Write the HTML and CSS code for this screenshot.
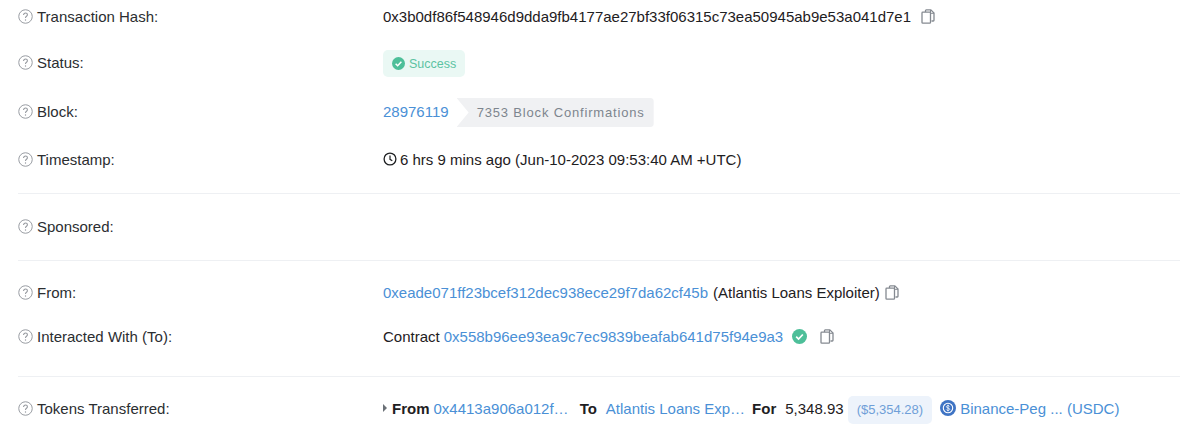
FILE: index.html
```html
<!DOCTYPE html>
<html lang="en">
<head>
  <meta charset="UTF-8">
  <title>Transaction Details</title>
  <link rel="stylesheet" href="styles.css">
</head>
<body>
  <svg class="defs" width="0" height="0">
    <symbol id="i-help" viewBox="0 0 14 14">
      <circle cx="7" cy="7" r="6.3" fill="none" stroke="currentColor" stroke-width="0.9"/>
      <path d="M5.2 5.5c0-1 .8-1.7 1.8-1.7s1.8.7 1.8 1.6c0 1.4-1.8 1.4-1.8 2.9" fill="none" stroke="currentColor" stroke-width="1"/>
      <circle cx="7" cy="10.2" r=".65" fill="currentColor"/>
    </symbol>
    <symbol id="i-copy" viewBox="0 0 14 15">
      <path d="M4.5 3V1.6c0-.4.3-.7.7-.7h4.6L13 4v7.3c0 .4-.3.7-.7.7H10.500" fill="none" stroke="currentColor" stroke-width="1.300"/>
      <path d="M9.500 1v3.300H13" fill="none" stroke="currentColor" stroke-width="1"/>
      <rect x="1" y="3.200" width="8.500" height="11" rx=".8" fill="#fff" stroke="currentColor" stroke-width="1.300"/>
    </symbol>
    <symbol id="i-check" viewBox="0 0 14 14">
      <circle cx="7" cy="7" r="7" fill="currentColor"/>
      <path d="M3.900 7.200l2.200 2.200 4-4.300" fill="none" stroke="#fff" stroke-width="1.600"/>
    </symbol>
  </svg>

  <section class="group group-first">
    <div class="row">
      <div class="label"><svg class="help"><use href="#i-help"/></svg>Transaction Hash:</div>
      <div class="value">
        <span>0x3b0df86f548946d9dda9fb4177ae27bf33f06315c73ea50945ab9e53a041d7e1</span>
        <svg class="copy copy-hash"><use href="#i-copy"/></svg>
      </div>
    </div>
    <div class="row row-status">
      <div class="label"><svg class="help"><use href="#i-help"/></svg>Status:</div>
      <div class="value">
        <span class="badge"><svg class="check"><use href="#i-check"/></svg>Success</span>
      </div>
    </div>
    <div class="row row-block">
      <div class="label"><svg class="help"><use href="#i-help"/></svg>Block:</div>
      <div class="value">
        <a class="link">28976119</a>
        <span class="confirm">7353 Block Confirmations</span>
      </div>
    </div>
    <div class="row row-time">
      <div class="label"><svg class="help"><use href="#i-help"/></svg>Timestamp:</div>
      <div class="value">
        <svg class="clock" viewBox="0 0 14 14">
          <circle cx="7" cy="7" r="5.900" fill="none" stroke="currentColor" stroke-width="1.300"/>
          <path d="M7 3.500V7.300l2.300 1.500" fill="none" stroke="currentColor" stroke-width="1.200"/>
        </svg>
        <span>6 hrs 9 mins ago (Jun-10-2023 09:53:40 AM +UTC)</span>
      </div>
    </div>
  </section>

  <section class="group">
    <div class="row">
      <div class="label"><svg class="help"><use href="#i-help"/></svg>Sponsored:</div>
      <div class="value"></div>
    </div>
  </section>

  <section class="group group-addr">
    <div class="row">
      <div class="label"><svg class="help"><use href="#i-help"/></svg>From:</div>
      <div class="value">
        <a class="link">0xeade071ff23bcef312dec938ece29f7da62cf45b</a>
        <span class="owner">(Atlantis Loans Exploiter)</span>
        <svg class="copy copy-from"><use href="#i-copy"/></svg>
      </div>
    </div>
    <div class="row row-to">
      <div class="label"><svg class="help"><use href="#i-help"/></svg>Interacted With (To):</div>
      <div class="value">
        <span>Contract</span>
        <a class="link contract">0x558b96ee93ea9c7ec9839beafab641d75f94e9a3</a>
        <svg class="check check-green"><use href="#i-check"/></svg>
        <svg class="copy copy-to"><use href="#i-copy"/></svg>
      </div>
    </div>
  </section>

  <section class="group group-last">
    <div class="row">
      <div class="label"><svg class="help"><use href="#i-help"/></svg>Tokens Transferred:</div>
      <div class="value">
        <span class="caret"></span>
        <b class="word">From</b>
        <a class="link from-addr">0x4413a906a012f…</a>
        <b class="word word-to">To</b>
        <a class="link to-addr">Atlantis Loans Exp…</a>
        <b class="word word-for">For</b>
        <span class="amount">5,348.93</span>
        <span class="price">($5,354.28)</span>
        <svg class="coin" viewBox="0 0 16 16">
          <circle cx="8" cy="8" r="8" fill="#3f74c4"/>
          <circle cx="8" cy="8" r="4.700" fill="none" stroke="#fff" stroke-width="1.100"/>
          <path d="M9.600 6.500C9.300 5.900 8.700 5.600 8 5.600c-.9 0-1.600.5-1.600 1.200 0 1.600 3.300.8 3.300 2.400 0 .7-.7 1.200-1.700 1.200-.8 0-1.400-.3-1.700-.9M8 4.700v6.600" fill="none" stroke="#fff" stroke-width=".8"/>
        </svg>
        <a class="link">Binance-Peg ... (USDC)</a>
      </div>
    </div>
  </section>
</body>
</html>
```

FILE: styles.css
```css
body {
  margin: 0;
  background-color: #fff;
  color: #1e2022;
  font-family: "Liberation Sans", Arial, sans-serif;
  font-size: 15px;
  overflow: hidden;
}
.defs {
  position: absolute;
}
.group {
  margin-left: 18px;
  padding: 16px 0;
  border-bottom: 1px solid #eef0f3;
}
.group-first {
  padding-top: 0;
}
.group-addr {
  padding-top: 15px;
  padding-bottom: 22px;
}
.group-last {
  border-bottom: none;
  padding-top: 15px;
}
.row {
  display: flex;
  align-items: center;
  height: 32px;
  margin-bottom: 2px;
}
.row-status {
  margin-top: 14px;
}
.row-block {
  margin-top: 17px;
}
.row-time {
  margin-top: 16px;
}
.row-to {
  margin-top: 12px;
}
.label {
  display: flex;
  align-items: center;
  width: 365px;
  flex-shrink: 0;
  color: #2b2e31;
}
.help {
  width: 15px;
  height: 15px;
  margin-right: 4px;
  color: #94989e;
}
.value {
  display: flex;
  align-items: center;
  white-space: nowrap;
}
.link {
  color: #4a90d6;
}
.copy {
  width: 14px;
  height: 15px;
  color: #858a91;
}
.copy-hash {
  margin-left: 10px;
}
.copy-from {
  margin-left: 5px;
}
.copy-to {
  margin-left: 13px;
}
.badge {
  display: flex;
  align-items: center;
  height: 27px;
  margin-top: 3px;
  padding: 0 9px;
  border-radius: 5px;
  background-color: #eaf8f4;
  color: #5cc3a2;
  font-size: 12.5px;
}
.check {
  width: 13px;
  height: 13px;
  margin-right: 4px;
  color: #4dbf99;
}
.check-green {
  width: 15px;
  height: 15px;
  margin: 0 0 0 9px;
}
.confirm {
  height: 29px;
  line-height: 29px;
  margin-top: 3px;
  margin-left: 8px;
  padding: 0 9px 0 20px;
  border-radius: 0 4px 4px 0;
  background-color: #f0f1f3;
  clip-path: polygon(0 0, 100% 0, 100% 100%, 0 100%, 12px 50%);
  color: #7d858e;
  font-size: 13px;
  letter-spacing: 0.83px;
}
.clock {
  width: 14px;
  height: 14px;
  margin-right: 3px;
}
.owner {
  margin-left: 5px;
}
.contract {
  margin-left: 4px;
}
.caret {
  width: 0;
  height: 0;
  margin-right: 5px;
  border-left: 4px solid #6b7177;
  border-top: 4px solid transparent;
  border-bottom: 4px solid transparent;
}
.word {
  color: #1e2022;
}
.from-addr {
  margin-left: 4px;
}
.word-to {
  margin-left: 11px;
}
.to-addr {
  margin-left: 9px;
}
.word-for {
  margin-left: 7px;
}
.amount {
  margin-left: 9px;
}
.price {
  margin-top: 4px;
  margin-left: 4px;
  height: 28px;
  line-height: 28px;
  padding: 0 9px;
  border-radius: 5px;
  background-color: #edf3fb;
  color: #6f9fd8;
  font-size: 13px;
}
.coin {
  width: 16px;
  height: 16px;
  margin: 0 4px 0 8px;
}
```
